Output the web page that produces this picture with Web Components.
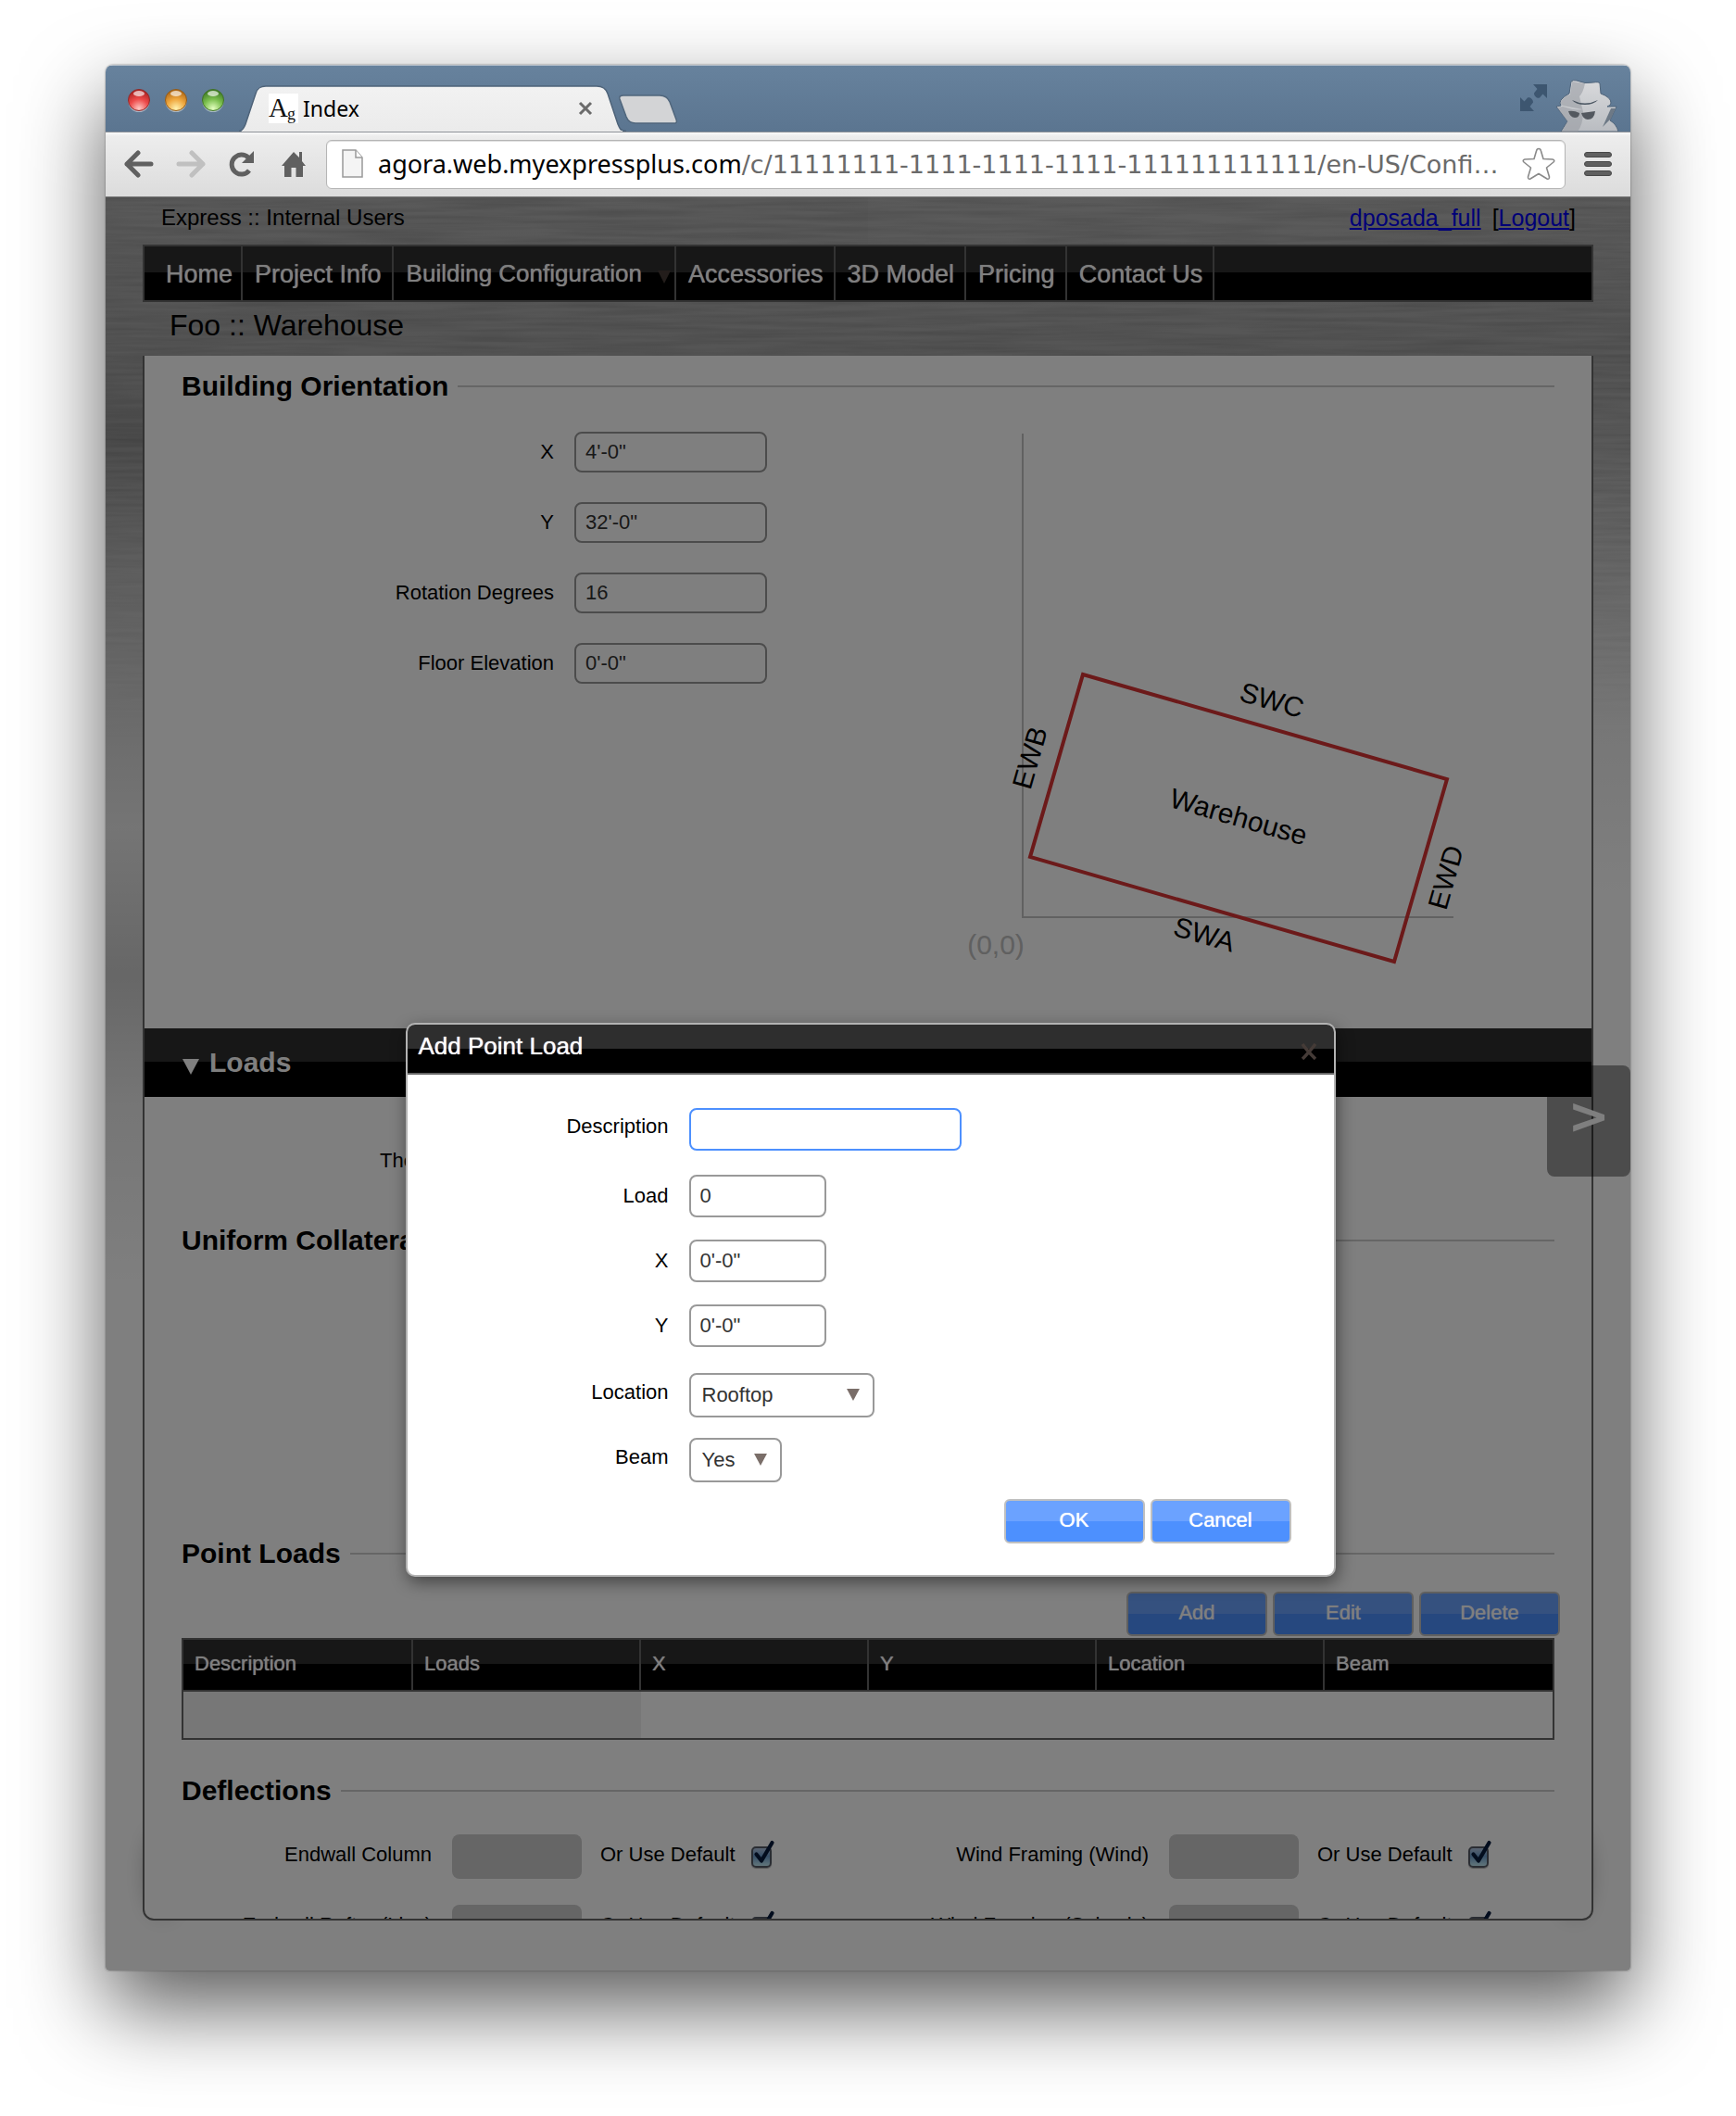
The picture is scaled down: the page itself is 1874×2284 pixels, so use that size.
<!DOCTYPE html>
<html lang="en">
<head>
<meta charset="utf-8">
<title>Index</title>
<style>
  html, body { height: 100%; }
  body {
    margin: 0; background: #fff; color: #000; overflow: hidden;
    font-family: "Liberation Sans", Arial, sans-serif; font-size: 22px;
  }
</style>
</head>
<body>
<browser-window>
  <browser-tab slot="tab">Index</browser-tab>
  <span slot="host">agora.web.myexpressplus.com</span>
  <span slot="path">/c/11111111-1111-1111-1111-111111111111/en-US/Confi…</span>
  <app-page>
    <app-header slot="header">
      <nav-item slot="nav" first>Home</nav-item>
      <nav-item slot="nav">Project Info</nav-item>
      <nav-item slot="nav" menu>Building Configuration</nav-item>
      <nav-item slot="nav">Accessories</nav-item>
      <nav-item slot="nav">3D Model</nav-item>
      <nav-item slot="nav">Pricing</nav-item>
      <nav-item slot="nav">Contact Us</nav-item>
      <span slot="title">Foo :: Warehouse</span>
    </app-header>

    <orientation-section></orientation-section>
    <collapse-bar>Loads</collapse-bar>
    <loads-section></loads-section>

    <modal-dialog slot="dialog" heading="Add Point Load"></modal-dialog>
  </app-page>
</browser-window>

<script>
const define = (name, html, init) => {
  const template = document.createElement('template');
  template.innerHTML = html;
  customElements.define(name, class extends HTMLElement {
    constructor() {
      super();
      this.attachShadow({ mode: 'open' }).append(template.content.cloneNode(true));
    }
    connectedCallback() {
      if (init && !this.ready) { this.ready = true; init(this, this.shadowRoot); }
    }
  });
};

/* ---------- small parts ---------- */

define('section-heading', `
<style>
  :host { display: flex; align-items: center; gap: 10px; }
  h2 { margin: 0; font-size: 30px; line-height: 34px; font-weight: bold; white-space: nowrap; }
  i { flex: 1; height: 2px; background: #ccc; }
</style>
<h2><slot></slot></h2><i></i>`);

define('push-button', `
<style>
  :host { display: block; width: 152px; }
  button {
    box-sizing: border-box; width: 100%; height: 48px; padding: 0 0 3px; margin: 0;
    border: 2px solid #c0c0c0; border-radius: 6px; color: #fff;
    font: 22px "Liberation Sans", Arial, sans-serif; text-shadow: 0 0 1px #fff;
    background: linear-gradient(#6ba2ff 50%, #4d90fe 50%);
  }
</style>
<button type="button"><slot></slot></button>`);

define('form-field', `
<style>
  :host { display: flex; align-items: center; gap: 22px; --label: 402px; --width: 208px; --height: 44px; }
  :host([modal]) { --label: 282px; --width: 148px; --height: 46px; }
  :host([wide]) { --width: 294px; margin-bottom: 2px; }
  label { flex: 0 0 var(--label); text-align: right; font-size: 22px; line-height: 26px; }
  :host([high]) label { padding-bottom: 6px; box-sizing: border-box; }
  input {
    box-sizing: border-box; width: var(--width); height: var(--height); margin: 0; padding: 0 10px;
    border: 2px solid #999; border-radius: 8px; background: #fff; color: #333; outline: 0;
    font: 22px "Liberation Sans", Arial, sans-serif;
  }
  :host([active]) input { border-color: #4d90fe; }
</style>
<label for="f"></label><input id="f" type="text">`,
(el, root) => {
  root.querySelector('label').textContent = el.getAttribute('label');
  root.querySelector('input').value = el.getAttribute('value') || '';
});

define('select-field', `
<style>
  :host { display: flex; align-items: center; gap: 22px; }
  label { flex: 0 0 282px; box-sizing: border-box; padding-bottom: 6px; text-align: right; font-size: 22px; line-height: 26px; }
  span { position: relative; display: block; width: var(--width, 200px); }
  select {
    appearance: none; box-sizing: border-box; display: block; width: 100%; height: 48px; margin: 0; padding: 0 12px 2px;
    border: 2px solid #999; border-radius: 8px; background: #fff; color: #333;
    font: 22px "Liberation Sans", Arial, sans-serif;
  }
  svg { position: absolute; right: 16px; top: 17px; pointer-events: none; }
</style>
<label for="s"></label>
<span><select id="s"><option></option></select>
<svg width="14" height="13" viewBox="0 0 15 14"><path d="M0 0H15L7.500 14Z" fill="#7a6e69"/></svg></span>`,
(el, root) => {
  root.querySelector('label').textContent = el.getAttribute('label');
  root.querySelector('option').textContent = el.getAttribute('value');
});

define('deflection-field', `
<style>
  :host { display: flex; align-items: center; height: 48px; }
  .name { flex: 0 0 270px; margin-right: 22px; }
  label { text-align: right; font-size: 22px; line-height: 26px; padding-bottom: 5px; white-space: nowrap; }
  .text {
    box-sizing: border-box; width: 140px; height: 48px; margin: 0 20px 0 0; border: 0; padding: 0 10px;
    border-radius: 8px; background: #ccc;
  }
  .box { position: relative; width: 22px; height: 22px; margin-left: 17px; }
  .check {
    appearance: none; display: block; box-sizing: border-box; width: 22px; height: 23px; margin: 0;
    border: 2px solid #555b66; border-radius: 5px;
    background: linear-gradient(#b4c8e4, #6f9fd0 45%, #c4ecf6); box-shadow: 0 1px 1px #aaa;
  }
  svg { position: absolute; left: 0; top: -6px; pointer-events: none; overflow: visible; }
</style>
<label class="name" for="t"></label><input class="text" id="t" type="text" disabled>
<label for="c">Or Use Default</label>
<span class="box"><input class="check" id="c" type="checkbox" checked>
<svg width="26" height="26" viewBox="0 0 26 26"><path d="M5.500 14.500L11 21.500L22.500 2" fill="none" stroke="#061a3c" stroke-width="4.200" stroke-linecap="round" stroke-linejoin="round"/></svg></span>`,
(el, root) => { root.querySelector('.name').textContent = el.getAttribute('label'); });

/* ---------- page sections ---------- */

define('nav-item', `
<style>
  :host { display: flex; border-right: 2px solid #666; }
  a {
    display: flex; align-items: center; gap: 17px; padding: 3px 11px 0 13px; color: #fff; text-decoration: none;
    font-size: 27px; text-shadow: 0 0 1px #fff; white-space: nowrap;
  }
  :host([first]) a { padding-left: 23px; padding-right: 9px; }
  :host([menu]) a { font-size: 26px; padding: 1px 4px 0 14px; }
  svg { display: none; margin-top: 6px; }
  :host([menu]) svg { display: block; }
</style>
<a href="#"><slot></slot><svg width="14" height="14" viewBox="0 0 14 14"><path d="M0 0H14L7 14Z" fill="#463b37"/></svg></a>`);

define('app-header', `
<style>
  :host { display: block; padding-top: 8px; }
  .user { display: flex; justify-content: space-between; padding: 0 19px 0 20px; font-size: 24px; line-height: 28px; }
  .links { font-size: 25px; display: flex; gap: 12px; }
  .user a { color: #00e; }
  nav {
    display: flex; height: 58px; margin-top: 15px; border: 2px solid #666;
    background: linear-gradient(#2e2e2e 28px, #000 28px);
  }
  h1 { margin: 7px 0 15px; padding-left: 29px; font-size: 32px; line-height: 36px; font-weight: normal; }
</style>
<div class="user"><span>Express :: Internal Users</span>
<span class="links"><a href="#">dposada_full</a><span>[<a href="#">Logout</a>]</span></span></div>
<nav><slot name="nav"></slot></nav>
<h1><slot name="title"></slot></h1>`);

define('building-plan', `
<style>
  :host { display: block; }
  svg { display: block; }
  text { font-family: "Liberation Sans", Arial, sans-serif; font-size: 30px; text-anchor: middle; fill: #000; }
</style>
<svg width="640" height="620" viewBox="1030 450 640 620" role="img" aria-label="Building plan">
  <path d="M1104 468V990H1569" fill="none" stroke="#c2c2c2" stroke-width="2"/>
  <path d="M1169 728L1562 841L1505 1038L1112 925Z" fill="none" stroke="#d83434" stroke-width="4"/>
  <text x="1075" y="1030" style="fill:#c0c0c0">(0,0)</text>
  <text transform="translate(1373 756) rotate(16)" y="10">SWC</text>
  <text transform="translate(1300 1009) rotate(16)" y="10">SWA</text>
  <text transform="translate(1337 882) rotate(16)" y="10">Warehouse</text>
  <text transform="translate(1112 818) rotate(-74)" y="10">EWB</text>
  <text transform="translate(1561 947) rotate(-74)" y="10">EWD</text>
</svg>`);

define('orientation-section', `
<style>
  :host { display: block; padding: 16px 40px; }
  .body { display: grid; grid-template-columns: 1fr 648px; margin: 16px 0 24px; }
  .fields { display: flex; flex-direction: column; gap: 32px; padding-top: 16px; }
</style>
<section-heading>Building Orientation</section-heading>
<div class="body">
  <div class="fields">
    <form-field label="X" value="4'-0&quot;"></form-field>
    <form-field label="Y" value="32'-0&quot;"></form-field>
    <form-field label="Rotation Degrees" value="16"></form-field>
    <form-field label="Floor Elevation" value="0'-0&quot;"></form-field>
  </div>
  <building-plan></building-plan>
</div>`);

define('collapse-bar', `
<style>
  :host { display: block; background: linear-gradient(#2e2e2e 36px, #000 36px); }
  button {
    display: flex; align-items: center; gap: 11px; width: 100%; height: 74px; margin: 0; padding: 0 41px;
    border: 0; background: none; color: #fff; font: bold 30px "Liberation Sans", Arial, sans-serif;
  }
  svg { margin-top: 8px; }
</style>
<button type="button" aria-expanded="true"><svg width="18" height="17" viewBox="0 0 18 17"><path d="M0 0H18L9 17Z" fill="#fff"/></svg><slot></slot></button>`);

define('loads-table', `
<style>
  :host { display: block; }
  table { width: 100%; table-layout: fixed; border-collapse: separate; border-spacing: 0; border: 2px solid #666; }
  th {
    box-sizing: border-box; height: 56px; padding: 0 12px 2px; text-align: left; font-weight: normal; color: #fff;
    text-shadow: 0 0 1px #fff; border-right: 2px solid #666; border-bottom: 2px solid #666;
    background: linear-gradient(#2e2e2e 26px, #000 26px);
  }
  th:first-child { width: 248px; }
  th:last-child { border-right: 0; }
  td { height: 50px; padding: 0; }
  td:nth-child(-n+2) { background: #eee; }
</style>
<table>
  <thead><tr><th>Description</th><th>Loads</th><th>X</th><th>Y</th><th>Location</th><th>Beam</th></tr></thead>
  <tbody><tr><td></td><td></td><td></td><td></td><td></td><td></td></tr></tbody>
</table>`);

define('loads-section', `
<style>
  :host { display: block; padding: 56px 40px 0; }
  p { margin: 0 0 56px; padding-left: 214px; line-height: 26px; }
  .uniform { min-height: 304px; }
  .buttons { display: flex; justify-content: flex-end; gap: 6px; margin: 24px -6px 2px 0; }
  .deflections { margin-top: 38px; }
  .grid { display: grid; grid-template-columns: 774fr 708fr; row-gap: 28px; margin-top: 30px; }
</style>
<p>The</p>
<section-heading>Uniform Collateral</section-heading>
<div class="uniform"></div>
<section-heading>Point Loads</section-heading>
<div class="buttons"><push-button>Add</push-button><push-button>Edit</push-button><push-button>Delete</push-button></div>
<loads-table></loads-table>
<section-heading class="deflections">Deflections</section-heading>
<div class="grid">
  <deflection-field label="Endwall Column"></deflection-field>
  <deflection-field label="Wind Framing (Wind)"></deflection-field>
  <deflection-field label="Endwall Rafter (Live)"></deflection-field>
  <deflection-field label="Wind Framing (Seismic)"></deflection-field>
</div>`);

define('modal-dialog', `
<style>
  :host {
    display: block; width: 1000px; border: 2px solid #b3b3b3; border-radius: 10px; background: #fff; overflow: hidden;
    box-shadow: 2px 6px 18px rgba(0,0,0,.45);
  }
  header {
    display: flex; justify-content: space-between; height: 52px; padding: 0 18px 0 12px; color: #fff;
    border-bottom: 2px solid #666; background: linear-gradient(#2e2e2e 26px, #000 26px);
  }
  h2 { margin: 0; font-size: 26px; line-height: 46px; font-weight: normal; text-shadow: 0 0 1px #fff; }
  header button { display: flex; align-items: center; padding: 6px 0 0; margin: 0; border: 0; background: none; }
  form { padding: 36px 46px 34px 0; }
  .group { display: flex; flex-direction: column; gap: 24px; }
  .choices { gap: 22px; margin-top: 28px; }
  .beam { --width: 100px; }
  .actions { display: flex; justify-content: flex-end; gap: 6px; margin-top: 18px; }
</style>
<header><h2></h2><button type="button" aria-label="Close"><svg width="18" height="18" viewBox="0 0 18 18"><path d="M2 1C6 7 11 12 16 17M16 1C11 7 7 12 2 17" fill="none" stroke="#453b37" stroke-width="3.500"/></svg></button></header>
<form>
  <div class="group">
    <form-field modal wide high active label="Description"></form-field>
    <form-field modal label="Load" value="0"></form-field>
    <form-field modal label="X" value="0'-0&quot;"></form-field>
    <form-field modal label="Y" value="0'-0&quot;"></form-field>
  </div>
  <div class="group choices">
    <select-field label="Location" value="Rooftop"></select-field>
    <select-field class="beam" label="Beam" value="Yes"></select-field>
  </div>
  <div class="actions"><push-button>OK</push-button><push-button>Cancel</push-button></div>
</form>`,
(el, root) => { root.querySelector('h2').textContent = el.getAttribute('heading'); });

define('app-page', `
<style>
  :host {
    position: relative; isolation: isolate; flex: 1; min-height: 0; display: flex; flex-direction: column; box-sizing: border-box;
    padding: 0 40px 54px; overflow: hidden;
    background:
      linear-gradient(#b4b4b4, #aaa 170px, #9a9a9a 255px, #c0c0c0 410px, #d8d8d8 570px, #eaeaea 680px, #cecece 840px, #ececec 980px, #fff 1180px) 0 0 / 50% 100% no-repeat,
      linear-gradient(#b8b8b8, #aaa 170px, #b4b4b4 255px, #d0d0d0 410px, #eee 570px, #fff 760px) 100% 0 / 50% 100% no-repeat;
  }
  .brushed { position: absolute; inset: 0; width: 100%; height: 620px; z-index: -1; opacity: .14;
    -webkit-mask-image: linear-gradient(#000 300px, transparent 600px); mask-image: linear-gradient(#000 300px, transparent 600px); }
  main {
    position: relative; z-index: 1; flex: 1; min-height: 0; overflow: hidden; background: #fff;
    border: 2px solid #666; border-top: 0; border-radius: 0 0 12px 12px;
  }
  .lift { position: absolute; bottom: 60px; width: 30px; height: 90px; z-index: 0; border-radius: 50%; box-shadow: 0 0 24px rgba(0,0,0,.35); }
  .l { left: 46px; } .r { right: 46px; }
  .next {
    position: absolute; z-index: 2; right: 0; top: 937px; width: 90px; height: 120px; margin: 0; padding: 0 0 10px; border: 0;
    border-radius: 8px; background: rgba(0,0,0,.4); color: #fff; font: bold 54px/54px "DejaVu Sans", sans-serif;
  }
  .shade {
    position: absolute; z-index: 3; inset: 0; display: flex; justify-content: center; align-items: flex-start;
    padding: 891px 0 0 5px; background: rgba(0,0,0,.5);
  }
</style>
<svg class="brushed" preserveAspectRatio="none" aria-hidden="true">
  <filter id="grain" x="0" y="0" width="100%" height="100%"><feTurbulence type="fractalNoise" baseFrequency="0.008 0.2" numOctaves="3" seed="4"/><feColorMatrix values="0 0 0 0 0  0 0 0 0 0  0 0 0 0 0  1.400 0 0 0 -0.400"/></filter>
  <rect width="100%" height="100%" filter="url(#grain)"/>
</svg>
<slot name="header"></slot>
<i class="lift l"></i><i class="lift r"></i>
<main><slot></slot></main>
<button class="next" type="button" aria-label="Next">&gt;</button>
<div class="shade"><slot name="dialog"></slot></div>`);

/* ---------- browser frame ---------- */

define('browser-tab', `
<style>
  :host { position: relative; display: flex; align-items: center; gap: 5px; width: 418px; height: 50px; box-sizing: border-box; padding: 0 36px 0 32px; }
  .shape { position: absolute; left: 0; top: 0; }
  .icon { position: relative; display: flex; align-items: baseline; width: 32px; height: 32px; background: #fff; color: #111; font: 29px/30px "Liberation Serif", serif; }
  .icon small { font-size: 18px; line-height: 20px; margin-left: -1px; align-self: flex-end; }
  .name { position: relative; flex: 1; font: 23px/30px "Noto Sans", "Open Sans", sans-serif; }
  button { position: relative; display: block; margin: 0; padding: 0; border: 0; background: none; }
  button svg { display: block; }
</style>
<svg class="shape" width="418" height="50" viewBox="0 0 418 50" aria-hidden="true">
  <defs><linearGradient id="g" x2="0" y2="1"><stop stop-color="#f2f2f2"/><stop offset="1" stop-color="#ebebeb"/></linearGradient></defs>
  <path d="M0 49.500C3 49.500 5 47 7 42L18 9C20 3 23 1 29 1H386C392 1 396 3 398 9L409 42C411 47 412 49.500 418 49.500" fill="url(#g)" stroke="#4e6379" stroke-width="1.500"/>
  <path d="M3 50H414" stroke="#ececec" stroke-width="2"/>
</svg>
<span class="icon">A<small>g</small></span><span class="name"><slot></slot></span>
<button type="button" aria-label="Close tab"><svg width="16" height="16" viewBox="0 0 16 16"><path d="M2 2L14 14M14 2L2 14" stroke="#6b6b6b" stroke-width="3"/></svg></button>`);

define('browser-window', `
<style>
  :host {
    display: flex; flex-direction: column; box-sizing: border-box; height: 100vh; padding: 70px 114px 157px;
    background: #fff;
  }
  .window {
    flex: 1; min-height: 0; display: flex; flex-direction: column; border-radius: 8px 8px 4px 4px; overflow: hidden;
  }
  .cast { flex: 1; min-height: 0; display: flex; flex-direction: column; border-radius: 8px 8px 4px 4px; box-shadow: 0 40px 90px rgba(0,0,0,.64), 0 0 2px rgba(0,0,0,.5); }
  .title {
    display: flex; align-items: flex-end; height: 71px; border-top: 1px solid #b4bfca;
    background: linear-gradient(#67829d, #5b7590);
  }
  .lights { display: flex; gap: 16px; padding: 0 16px 18px 24px; }
  .lights svg { display: block; }
  .plus { display: block; margin: 0 0 7px -8px; padding: 0; border: 0; background: none; }
  .plus svg, .right svg { display: block; }
  .right { display: flex; align-items: flex-end; gap: 8px; margin-left: auto; padding-right: 13px; }
  .right .full { margin-bottom: 21px; }
  .tools {
    display: flex; align-items: center; box-sizing: border-box; height: 71px; padding: 1px 20px 2px; border-top: 1px solid #8d9197; border-bottom: 1px solid #777;
    background: linear-gradient(#fafafa, #ededed 4px, #dcdcdc);
  }
  .tools button { display: block; padding: 0; border: 0; background: none; margin: 0 24px 0 0; }
  .tools .reload { margin-right: 28px; }
  .tools .home { margin-right: 22px; }
  .tools button svg { display: block; }
  .box {
    flex: 1; min-width: 0; display: flex; align-items: center; box-sizing: border-box; height: 53px; margin: 0 20px 0 0; padding: 0 10px 0 16px;
    background: #fff; border: 1px solid #b5b5b5; border-radius: 6px; box-shadow: inset 0 1px 1px #ddd;
  }
  .url { flex: 1; min-width: 0; margin-left: 15px; white-space: nowrap; overflow: hidden; line-height: 40px; font-size: 27px; }
  .url { display: flex; align-items: baseline; }
  .host { font-family: "Noto Sans", sans-serif; color: #000; }
  .path { font-family: "DejaVu Sans", sans-serif; color: #6a6a6a; }
  .tools .box button, .tools .menu { margin: 0; }
</style>
<div class="cast"><div class="window">
  <div class="title">
    <div class="lights">
      <svg width="24" height="28" viewBox="0 0 24 28"><defs>
        <radialGradient id="r" cx=".5" cy=".9" r=".8"><stop stop-color="#ffc9c4"/><stop offset=".55" stop-color="#ee4b4b"/><stop offset="1" stop-color="#b32626"/></radialGradient>
        <radialGradient id="y" cx=".5" cy=".9" r=".8"><stop stop-color="#fff3b0"/><stop offset=".55" stop-color="#f0a83e"/><stop offset="1" stop-color="#b8701c"/></radialGradient>
        <radialGradient id="n" cx=".5" cy=".9" r=".8"><stop stop-color="#e4ffc0"/><stop offset=".55" stop-color="#7cc04f"/><stop offset="1" stop-color="#46832a"/></radialGradient>
      </defs><circle cx="12" cy="13.500" r="11.500" fill="#a9b9c9"/><circle cx="12" cy="12" r="11.500" fill="url(#r)" stroke="#8c2b2b"/><ellipse cx="12" cy="5" rx="6" ry="3" fill="#fff" opacity=".65"/></svg>
      <svg width="24" height="28" viewBox="0 0 24 28"><circle cx="12" cy="13.500" r="11.500" fill="#a9b9c9"/><circle cx="12" cy="12" r="11.500" fill="url(#y)" stroke="#8f5a1c"/><ellipse cx="12" cy="5" rx="6" ry="3" fill="#fff" opacity=".65"/></svg>
      <svg width="24" height="28" viewBox="0 0 24 28"><circle cx="12" cy="13.500" r="11.500" fill="#a9b9c9"/><circle cx="12" cy="12" r="11.500" fill="url(#n)" stroke="#3f7028"/><ellipse cx="12" cy="5" rx="6" ry="3" fill="#fff" opacity=".65"/></svg>
    </div>
    <slot name="tab"></slot>
    <button class="plus" type="button" aria-label="New tab"><svg width="64" height="33" viewBox="0 0 64 33"><path d="M5 1H44C50 1 53 3 55 8L62 27C63 30 62 31 60 31H18C13 31 10 29 8 24L1 5C0 2 2 1 5 1Z" fill="#d3d4d6" stroke="#50667c" stroke-width="1.500"/></svg></button>
    <div class="right">
      <svg class="full" width="30" height="31" viewBox="0 0 30 31"><g fill="#3d5670"><path d="M14 1H29V16L24.500 11.500L21 15.500C19 16.500 15 14.500 15 10.500L18.500 6Z"/><path d="M15 30H0V15L4.500 19.500L8 15.500C10 14.500 14 16.500 14 20.500L10.500 25Z"/></g></svg>
      <svg width="68" height="56" viewBox="0 0 68 56"><defs><linearGradient id="s" x2="0" y2="1"><stop stop-color="#d9dadc"/><stop offset="1" stop-color="#b9bcc1"/></linearGradient></defs>
        <path d="M17 2Q19 0 23 1Q32 5 41 3Q47 2 48 4L49 15Q60 19 60 25Q60 28 56 29L66 29L59 44Q66 48 68 56H6L13 45L1 29L6 28Q4 25 6 22Q9 18 15 15Z" fill="url(#s)" stroke="#4f647a"/>
        <path d="M18 2Q25 3 32 4Q30 14 26 18L30 35Q30 48 24 56H7L13 45L2 30L8 29Q24 34 29 32L8 28Q4 26 7 22Q11 17 16 16Z" fill="#9a9da3" opacity=".6"/>
        <path d="M18 22Q32 29 46 22Q41 27 32 27Q22 27 18 22Z" fill="#4a5561"/>
        <path d="M14 34Q20 33 26 36Q26 41 21 41Q16 41 14 34ZM28 36Q36 35 43 34Q42 43 35 43Q30 43 28 36Z" fill="#53585f"/>
        <path d="M65 31L60 42L51 51L60 31" fill="#6d7986"/></svg>
    </div>
  </div>
  <div class="tools">
    <button type="button" aria-label="Back"><svg width="32" height="30" viewBox="0 0 32 30"><path d="M15 3L3 15L15 27M3 15H29" fill="none" stroke="#606060" stroke-width="5" stroke-linecap="round" stroke-linejoin="round"/></svg></button>
    <button type="button" aria-label="Forward"><svg width="32" height="30" viewBox="0 0 32 30"><path d="M17 3L29 15L17 27M29 15H3" fill="none" stroke="#c0c0c0" stroke-width="5" stroke-linecap="round" stroke-linejoin="round"/></svg></button>
    <button class="reload" type="button" aria-label="Reload"><svg width="30" height="30" viewBox="0 0 30 30"><path d="M22 8A10.500 10.500 0 1 0 23 22" fill="none" stroke="#606060" stroke-width="5"/><path d="M28 1V14H15Z" fill="#606060"/></svg></button>
    <button class="home" type="button" aria-label="Home"><svg width="26" height="30" viewBox="0 0 26 30"><path d="M13 2L0 17H3V29H10.500V19H15.500V29H23V17H26L22 12V2H19V8Z" fill="#606060"/></svg></button>
    <div class="box">
      <svg width="24" height="32" viewBox="0 0 24 32"><path d="M1 1H15L22 9V30H1Z" fill="#f4f4f4" stroke="#999" stroke-width="1.500"/><path d="M15 1V9H22" fill="#fff" stroke="#999" stroke-width="1.500"/></svg>
      <div class="url" role="textbox" aria-label="Address"><span class="host"><slot name="host"></slot></span><span class="path"><slot name="path"></slot></span></div>
      <button type="button" aria-label="Bookmark"><svg width="36" height="36" viewBox="0 0 36 36"><path d="M18 1.500Q20 1.500 20.500 4L23 12.500L33 13Q36 14 34 16L26.500 22L29.500 32Q29.500 35 27 34L18 28.500L9 34Q6.500 35 6.500 32L9.500 22L2 16Q0 14 3 13L13 12.500L15.500 4Q16 1.500 18 1.500Z" fill="#fff" stroke="#8a8a8a" stroke-width="1.600" stroke-linejoin="round"/></svg></button>
    </div>
    <button class="menu" type="button" aria-label="Menu"><svg width="30" height="26" viewBox="0 0 30 26"><g fill="#606060" stroke="#474747"><rect x=".5" y=".5" width="29" height="5" rx="2.500"/><rect x=".5" y="10.500" width="29" height="5" rx="2.500"/><rect x=".5" y="20.500" width="29" height="5" rx="2.500"/></g></svg></button>
  </div>
  <slot></slot>
</div></div>
<style>::slotted(app-page) { flex: 1; min-height: 0; }</style>`);
</script>
</body>
</html>
